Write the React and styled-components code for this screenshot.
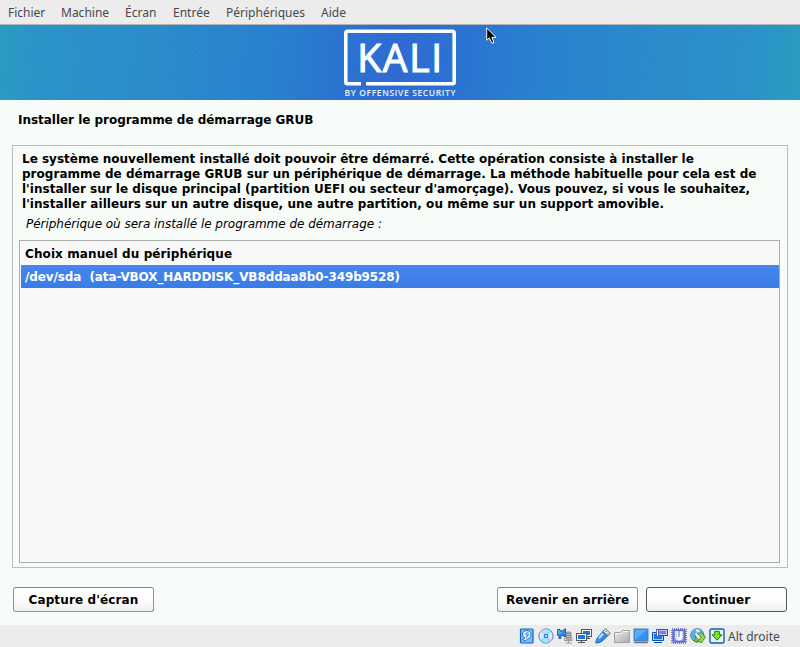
import React from "react";
import styled, { createGlobalStyle } from "styled-components";

const GlobalStyle = createGlobalStyle`
  * { box-sizing: border-box; }
  html, body { margin: 0; padding: 0; }
  body { background: #f7fcf9; overflow: hidden; }
`;

const Screen = styled.div`
  display: flex;
  flex-direction: column;
  width: 800px;
  height: 647px;
  background: #f7fcf9;
  color: #000;
  font: bold 12px/15px "DejaVu Sans", sans-serif;
`;

const MenuBar = styled.nav`
  display: flex;
  gap: 16px;
  flex: none;
  height: 25px;
  padding: 0 8px;
  background: #ececec;
  border-bottom: 1px solid #b4b4b4;
`;

const MenuItem = styled.span`
  width: ${(p) => p.$width}px;
  white-space: nowrap;
  color: #45494c;
  font: 400 12px/26px "Noto Sans", sans-serif;
`;

const Banner = styled.header`
  display: flex;
  justify-content: center;
  position: relative;
  flex: none;
  height: 75px;
  background:
    repeating-linear-gradient(128deg, rgba(255, 255, 255, 0.02) 0 2px, rgba(0, 0, 0, 0.01) 2px 4px),
    linear-gradient(94deg, #279cc0 0%, #2895c8 4%, #288ccb 20%, #2780d0 34%, #2873d1 42%, #2e69d2 50%, #2873d2 58%, #2780d0 67%, #288acb 80%, #2893c9 94%, #279cc0 100%);
`;

const LogoSvg = styled.svg`
  display: block;
  width: 120px;
  height: 75px;
`;

const Pointer = styled.svg`
  position: absolute;
  left: 486px;
  top: 2px;
  width: 11px;
  height: 17px;
`;

const Title = styled.h1`
  margin: 13px 0 0 18px;
  height: 32px;
  font: inherit;
  letter-spacing: ${(p) => p.$spacing}px;
`;

const Panel = styled.main`
  display: flex;
  flex-direction: column;
  flex: none;
  width: 776px;
  height: 423px;
  margin-left: 12px;
  padding: 6px 7px 4px 6px;
  border: 1px solid #b9c0bb;
`;

const Description = styled.div`
  padding-left: 3px;
`;

const Line = styled.div`
  white-space: pre;
  letter-spacing: ${(p) => p.$spacing}px;
`;

const Question = styled.div`
  margin: 5px 0 8px 7px;
  font-weight: 400;
  font-style: italic;
  letter-spacing: ${(p) => p.$spacing}px;
`;

const DeviceList = styled.div`
  flex: none;
  height: 323px;
  padding: 1px 0 0 1px;
  border: 1px solid #a9aeab;
  background: #f8f8f8;
`;

const Device = styled.div`
  height: 23px;
  padding-left: 4px;
  line-height: 25px;
  white-space: pre;
  letter-spacing: ${(p) => p.$spacing}px;
  color: ${(p) => (p.$selected ? "#fff" : "#000")};
  background: ${(p) => (p.$selected ? "linear-gradient(#4886ef, #397ce5)" : "none")};
`;

const Actions = styled.footer`
  display: flex;
  flex: none;
  gap: 8px;
  height: 57px;
  padding: 19px 13px 0;
`;

const Button = styled.button`
  width: 141px;
  height: 25px;
  padding: 1px 0 0;
  border: 1px solid ${(p) => (p.$primary ? "#555856" : "#929693")};
  border-top-color: ${(p) => (p.$primary ? "#555856" : "#7f8380")};
  border-radius: 3px;
  background: linear-gradient(#fff, #fcfcfc 55%, #efefef);
  color: #000;
  font: bold 12px/22px "DejaVu Sans", sans-serif;
  letter-spacing: ${(p) => p.$spacing}px;
  &:first-child { margin-right: auto; }
`;

const StatusBar = styled.div`
  display: flex;
  align-items: center;
  flex: none;
  gap: 3px;
  height: 22px;
  padding-left: 519px;
  background: #ececec;
`;

const StatusIcon = styled.svg`
  flex: none;
  width: 16px;
  height: 16px;
`;

const HostKey = styled.span`
  padding-top: 1px;
  white-space: nowrap;
  color: #45494c;
  font: 400 12px/21px "Noto Sans", sans-serif;
`;

const menu = [
  ["Fichier", 37], ["Machine", 48], ["Écran", 32],
  ["Entrée", 37], ["Périphériques", 79], ["Aide", 26],
];

const description = [
  ["Le système nouvellement installé doit pouvoir être démarré. Cette opération consiste à installer le", 0],
  ["programme de démarrage GRUB sur un périphérique de démarrage. La méthode habituelle pour cela est de", 0.03],
  ["l'installer sur le disque principal (partition UEFI ou secteur d'amorçage). Vous pouvez, si vous le souhaitez,", 0.01],
  ["l'installer ailleurs sur un autre disque, une autre partition, ou même sur un support amovible.", 0.04],
];

function Logo() {
  return (
    <LogoSvg viewBox="340 25 120 75">
      <path d="M361 83.8H347.5Q345.8 83.8 345.8 82V33Q345.8 31.2 347.6 31.2H452.4Q454.2 31.2 454.2 33V82Q454.2 83.8 452.4 83.8H366" fill="none" stroke="#f9fdfc" strokeWidth="3.6" />
      <text x="357.2" y="72.2" textLength="85" lengthAdjust="spacing" fill="#fafefd" stroke="#fafefd" strokeWidth="1.1" fontFamily="Open Sans, sans-serif" fontSize="39" fontWeight="400">KALI</text>
      <text x="344.5" y="95.6" textLength="111" fill="#e8f1fa" fontFamily="Open Sans, sans-serif" fontSize="8.5" fontWeight="600">BY OFFENSIVE SECURITY</text>
    </LogoSvg>
  );
}

function Icons() {
  return (
    <>
      <StatusIcon viewBox="0 0 16 16">
        <defs>
          <linearGradient id="blue" x1="0" y1="0" x2="1" y2="1"><stop stopColor="#7cc4ff" /><stop offset="1" stopColor="#0864d8" /></linearGradient>
          <linearGradient id="gray" x1="0" y1="0" x2="1" y2="1"><stop stopColor="#eee" /><stop offset="1" stopColor="#aaa" /></linearGradient>
        </defs>
        <rect x="1.5" y="1" width="12.5" height="14" rx="1" fill="#78bdf8" stroke="#1268c0" strokeWidth="1.2" />
        <path d="M3.5 6C3.5 1.8 11.8 1.3 12 6C12.2 10 9 10.5 6 13L3.5 11.5L6 10C4.5 9 3.5 8 3.5 6Z" fill="#e4f3ff" stroke="#1268c0" strokeWidth=".9" />
        <path d="M9.5 5Q7 4 6.7 6.5Q8 8.3 9.5 6.5L7 10" fill="none" stroke="#1268c0" strokeWidth=".9" />
      </StatusIcon>
      <StatusIcon viewBox="0 0 16 16">
        <circle cx="8" cy="8" r="7.1" fill="#d8eaff" stroke="#4c83c3" />
        <path d="M8 8L2 4Q4 1.5 7 1.3Z" fill="#d3c8ff" /><path d="M8 8L14 12Q12 14.5 9 14.7Z" fill="#b4c7ff" />
        <path d="M8 8L9 1.3Q12 2 13.5 4.5Z" fill="#80eddf" /><path d="M8 8L7 14.7Q4 14 2.5 11.5Z" fill="#80eddf" />
        <circle cx="8" cy="8" r="2.3" fill="#1976e7" /><circle cx="8" cy="8" r="1" fill="#fff" />
      </StatusIcon>
      <StatusIcon viewBox="0 0 16 16">
        <path d="M.7 1.5H3V3H5L8.5 .8V9L5 7.3H3.8V10.5H2V7.5H.7Z" fill="url(#blue)" stroke="#17599d" />
        <rect x="9" y="4" width="5" height="7.5" rx="1.5" fill="#bbb" stroke="#888" />
        <path d="M9 5.5h5M9 7.5h5M9 9.5h5" stroke="#777" strokeWidth=".7" /><path d="M7.5 10V12.5H15V10M11.5 12.5V15M8.5 15H14.5" fill="none" stroke="#999" />
      </StatusIcon>
      <StatusIcon viewBox="0 0 16 16">
        <rect x="5.5" y="1.5" width="10" height="7" fill="#fff" stroke="#555" /><rect x="7" y="3" width="7" height="4" fill="#1975e7" /><path d="M10 10.5H14M12 9V11" stroke="#555" />
        <rect x=".5" y="5.5" width="10" height="7" fill="#fff" stroke="#555" /><rect x="2" y="7" width="7" height="4" fill="#1975e7" /><path d="M2 14.5H9M5.5 13V15" stroke="#555" />
      </StatusIcon>
      <StatusIcon viewBox="0 0 16 16">
        <path d="M10.5 .7L15.3 5.5L12.5 8L8 3.5Z" fill="#f2f2f2" stroke="#606060" /><path d="M10.6 3.2L11.4 4M12.6 5.2L13.4 6" stroke="#333" />
        <path d="M8 3.5L12.5 8L6.8 13.4Q3.8 15.2 .8 15Q.8 12 3 9Z" fill="url(#blue)" stroke="#1764ae" /><path d="M4 10L8 5.7" stroke="#bce2ff" strokeWidth="2" />
      </StatusIcon>
      <StatusIcon viewBox="0 0 16 16"><path d="M.5 14.5V4.5H6.5L8.5 2.5H15.5V14.5Z" fill="url(#gray)" stroke="#a1a1a1" /><path d="M1.5 5.5H7L9 3.5H14.5" fill="none" stroke="#f8f8f8" /></StatusIcon>
      <StatusIcon viewBox="0 0 16 16"><rect x="1" y="1" width="14" height="12" fill="#3292f0" stroke="#3b83c7" /><path d="M2 12V2H14Z" fill="#a7d7ff" opacity=".35" /><path d="M2 14H14L15 15H1Z" fill="#747474" stroke="#777" strokeWidth=".5" /></StatusIcon>
      <StatusIcon viewBox="0 0 16 16">
        <path d="M.5 4.5H11.5V12.5H.5ZM2 14.5H10" fill="#d9efff" stroke="#07509f" /><rect x="1.7" y="5.7" width="8.6" height="5.6" fill="#1976e8" />
        <rect x="6" y="1.5" width="9.5" height="6" fill="#dfe2ff" stroke="#344aa5" /><rect x="7.2" y="2.7" width="7" height="3.6" fill="#7082e9" /><rect x="4.5" y="1.5" width="2" height="7" fill="#fff" stroke="#344aa5" strokeWidth=".8" />
      </StatusIcon>
      <StatusIcon viewBox="0 0 16 16"><rect x="1" y="1" width="14" height="14" fill="none" stroke="#5360b8" strokeWidth="1.5" strokeDasharray="1 1" /><rect x="2" y="2" width="12" height="12" rx="1" fill="#7d8fe5" stroke="#4051b7" /><path d="M4.3 3.3H7.3V9H8.7V3.3H11.7V9.5Q11.4 12.5 8 12.5Q4.6 12.5 4.3 9.5Z" fill="#fff" /><path d="M5.7 4.5V9.5Q6 11 8 11" fill="none" stroke="#a7b2ef" strokeWidth=".8" /></StatusIcon>
      <StatusIcon viewBox="0 0 16 16"><circle cx="7.3" cy="7.3" r="6.6" fill="#d8f0ff" stroke="#326ea5" /><path d="M1 8Q1 3 5 1.5L7 4L5 6L6.5 8L3 12Q1 10 1 8Z" fill="#56aeee" /><path d="M9 1.5Q13 3 13.5 6L10 5Z" fill="#56aeee" /><path d="M7 5H11.5L15.5 9.2L11 15L8.5 12.5L11.2 9Z" fill="#8edb4b" stroke="#437c25" strokeWidth=".9" /><path d="M5 8L8.5 11.5L7 14.5L3.5 12L5.5 11Z" fill="#70c93d" stroke="#437c25" strokeWidth=".8" /></StatusIcon>
      <StatusIcon viewBox="0 0 16 16"><rect x="1" y="1" width="14" height="14" rx="1.5" fill="#e3f1ff" stroke="#185fa5" strokeWidth="1.4" /><path d="M5.7 3.3H10.3V6.8H13L8 12.2L3 6.8H5.7Z" fill="#75ed16" stroke="#37740e" /></StatusIcon>
    </>
  );
}

export default function App() {
  return (
    <Screen>
      <GlobalStyle />
      <MenuBar>{menu.map(([label, width]) => <MenuItem key={label} $width={width}>{label}</MenuItem>)}</MenuBar>
      <Banner>
        <Logo />
        <Pointer viewBox="0 0 11 17"><path d="M.7 1V13.2L3.3 10.8L5.8 16H8L5.9 10.3H10Z" fill="#000" stroke="#fff" /></Pointer>
      </Banner>
      <Title $spacing={-0.03}>Installer le programme de démarrage GRUB</Title>
      <Panel>
        <Description>{description.map(([text, spacing]) => <Line key={text} $spacing={spacing}>{text}</Line>)}</Description>
        <Question $spacing={-0.03}>Périphérique où sera installé le programme de démarrage :</Question>
        <DeviceList>
          <Device $spacing={0.1}>Choix manuel du périphérique</Device>
          <Device $selected $spacing={-0.11}>/dev/sda  (ata-VBOX_HARDDISK_VB8ddaa8b0-349b9528)</Device>
        </DeviceList>
      </Panel>
      <Actions>
        <Button $spacing={0.13}>Capture d'écran</Button>
        <Button $spacing={0}>Revenir en arrière</Button>
        <Button $primary $spacing={0.1}>Continuer</Button>
      </Actions>
      <StatusBar><Icons /><HostKey>Alt droite</HostKey></StatusBar>
    </Screen>
  );
}
